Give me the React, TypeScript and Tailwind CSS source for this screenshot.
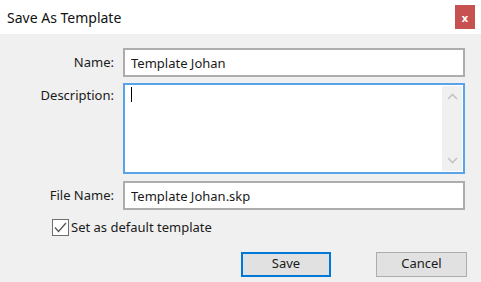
import { useState } from "react";

function ChevronUp() {
  return (
    <svg width="11" height="7" viewBox="0 0 11 7" fill="none" stroke="#c4c4c4" strokeWidth="1.6">
      <path d="M1 6L5.5 1.5L10 6" />
    </svg>
  );
}

function ChevronDown() {
  return (
    <svg width="11" height="7" viewBox="0 0 11 7" fill="none" stroke="#c4c4c4" strokeWidth="1.6">
      <path d="M1 1L5.5 5.5L10 1" />
    </svg>
  );
}

export default function App() {
  const [name, setName] = useState("Template Johan");
  const [fileName, setFileName] = useState("Template Johan.skp");
  const [isDefault, setIsDefault] = useState(true);

  return (
    <div className="flex h-[282px] w-[481px] flex-col overflow-hidden bg-[#f0f0f0] font-['Noto_Sans','Open_Sans',sans-serif] text-[13px] text-[#1a1a1a]">
      {/* title bar */}
      <div className="flex h-[34px] shrink-0 items-center justify-between bg-white pl-[7px] pr-[6px]">
        <span className="text-[14px] text-[#111]">Save As Template</span>
        <button className="flex h-[24px] w-[20px] items-center justify-center bg-[#c75050] text-[11px] font-bold leading-none text-white">
          x
        </button>
      </div>

      <div className="flex flex-col pt-[14px]">
        <div className="flex items-center">
          <label className="w-[114px] text-right">Name:</label>
          <input
            value={name}
            onChange={(e) => setName(e.target.value)}
            className="ml-[9px] h-[29px] w-[342px] border-2 border-[#adadad] bg-white px-[6px] outline-none"
          />
        </div>

        <div className="mt-[6px] flex items-start">
          <label className="w-[114px] pt-[3px] text-right">Description:</label>
          <div className="ml-[9px] flex h-[91px] w-[342px] border-2 border-[#5aa3e6] bg-white">
            <div className="flex-1 pl-[6px] pt-[2px]">
              <div className="h-[15px] w-px bg-black" />
            </div>
            <div className="my-px mr-px flex w-[20px] flex-col items-center justify-between bg-[#f0f0f0] py-[7px]">
              <ChevronUp />
              <ChevronDown />
            </div>
          </div>
        </div>

        <div className="mt-[7px] flex items-center">
          <label className="w-[114px] text-right">File Name:</label>
          <input
            value={fileName}
            onChange={(e) => setFileName(e.target.value)}
            className="ml-[9px] h-[29px] w-[342px] border-2 border-[#adadad] bg-white px-[6px] outline-none"
          />
        </div>

        <label className="mt-[8px] flex items-center pl-[52px]">
          <span
            onClick={() => setIsDefault(!isDefault)}
            className="flex h-[17px] w-[17px] items-center justify-center border border-[#6f6f6f] bg-white"
          >
            {isDefault && (
              <svg width="13" height="11" viewBox="0 0 13 11" fill="none" stroke="#555" strokeWidth="1.3">
                <path d="M1 5.5L4.5 9.5L12 1" />
              </svg>
            )}
          </span>
          <span className="ml-[2px]">Set as default template</span>
        </label>

        <div className="mt-[14px] flex">
          <button className="ml-[241px] h-[25px] w-[90px] border-2 border-[#0078d7] bg-[#e1e1e1]">Save</button>
          <button className="ml-[45px] h-[25px] w-[91px] border border-[#adadad] bg-[#e1e1e1]">Cancel</button>
        </div>
      </div>
    </div>
  );
}
